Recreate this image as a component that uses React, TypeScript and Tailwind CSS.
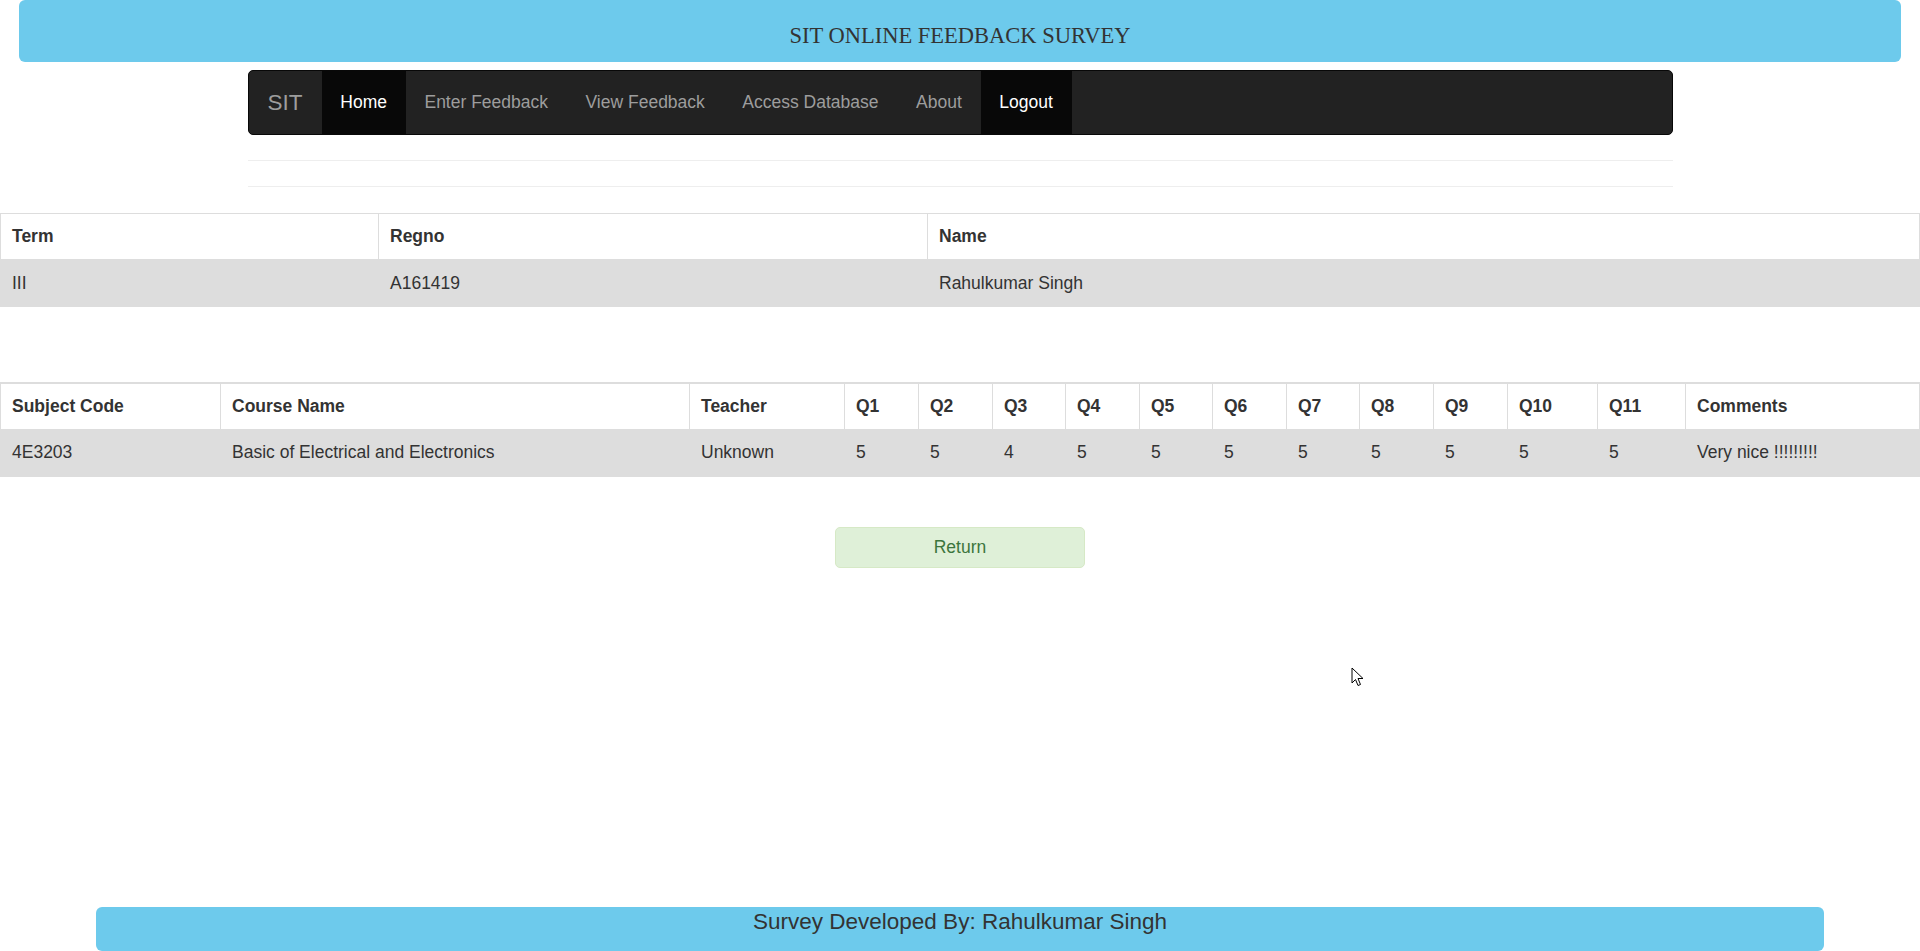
const navLinks = [
  { label: "Home", active: true },
  { label: "Enter Feedback" },
  { label: "View Feedback" },
  { label: "Access Database" },
  { label: "About" },
  { label: "Logout", active: true },
];

const studentCols = [
  { label: "Term", w: "w-[378px]" },
  { label: "Regno", w: "w-[549px]" },
  { label: "Name", w: "" },
];

const feedbackCols = [
  { label: "Subject Code", w: "w-[220px]" },
  { label: "Course Name", w: "w-[469px]" },
  { label: "Teacher", w: "w-[155px]" },
  { label: "Q1", w: "w-[74px]" },
  { label: "Q2", w: "w-[74px]" },
  { label: "Q3", w: "w-[73px]" },
  { label: "Q4", w: "w-[74px]" },
  { label: "Q5", w: "w-[73px]" },
  { label: "Q6", w: "w-[74px]" },
  { label: "Q7", w: "w-[73px]" },
  { label: "Q8", w: "w-[74px]" },
  { label: "Q9", w: "w-[74px]" },
  { label: "Q10", w: "w-[90px]" },
  { label: "Q11", w: "w-[88px]" },
  { label: "Comments", w: "" },
];

const feedbackRow = [
  "4E3203",
  "Basic of Electrical and Electronics",
  "Unknown",
  "5", "5", "4", "5", "5", "5", "5", "5", "5", "5", "5",
  "Very nice !!!!!!!!!",
];

function DataTable({
  cols,
  row,
  thickTop,
}: {
  cols: { label: string; w: string }[];
  row: string[];
  thickTop?: boolean;
}) {
  return (
    <table
      className={`w-full table-fixed border-collapse text-[17.5px] leading-[25px] text-[#333] ${
        thickTop ? "border-t-2 border-[#ddd]" : ""
      }`}
    >
      <thead>
        <tr>
          {cols.map((c) => (
            <th
              key={c.label}
              className={`${c.w} h-[46px] border border-[#ddd] bg-white px-[11px] text-left align-middle font-bold`}
            >
              {c.label}
            </th>
          ))}
        </tr>
      </thead>
      <tbody>
        <tr className="bg-[#dddddd]">
          {row.map((v, i) => (
            <td key={i} className="h-[47px] border border-[#ddd] px-[11px] align-middle whitespace-nowrap">
              {v}
            </td>
          ))}
        </tr>
      </tbody>
    </table>
  );
}

function Cursor() {
  return (
    <svg
      className="pointer-events-none absolute left-[1351px] top-[667px]"
      width="13"
      height="21"
      viewBox="0 0 13 21"
    >
      <path
        d="M1 1 L1 16 L4.5 12.5 L7 18.5 L9.5 17.5 L7 11.5 L12 11.5 Z"
        fill="white"
        stroke="black"
        strokeWidth="1"
        strokeLinejoin="round"
      />
    </svg>
  );
}

export default function App() {
  return (
    <div className="relative flex min-h-[951px] flex-col bg-white font-['Liberation_Sans',Arial,sans-serif] text-[#333]">
      <header className="mx-[19px] flex h-[62px] items-center justify-center rounded-md bg-[#6dcaec] pt-[10px]">
        <h1 className="font-['Liberation_Serif','Times_New_Roman',serif] text-[22.5px] font-normal text-[#333]">
          SIT ONLINE FEEDBACK SURVEY
        </h1>
      </header>

      <div className="mx-auto mt-[8px] w-[1425px]">
        <nav className="flex h-[65px] items-stretch rounded-[5px] border border-[#080808] bg-[#222]">
          <span className="flex items-center px-[19px] text-[22.5px] text-[#9d9d9d]">SIT</span>
          {navLinks.map((l) => (
            <a
              key={l.label}
              className={`flex items-center px-[18.75px] text-[17.5px] ${
                l.active ? "bg-[#080808] text-white" : "text-[#9d9d9d]"
              }`}
            >
              {l.label}
            </a>
          ))}
        </nav>
        <hr className="mt-[25px] border-t border-[#eee]" />
        <hr className="mt-[25px] border-t border-[#eee]" />
      </div>

      <div className="mt-[26px]">
        <DataTable cols={studentCols} row={["III", "A161419", "Rahulkumar Singh"]} />
      </div>

      <div className="mt-[75px]">
        <DataTable cols={feedbackCols} row={feedbackRow} thickTop />
      </div>

      <div className="mt-[50px] flex justify-center">
        <button className="h-[41px] w-[250px] rounded-[5px] border border-[#d6e9c6] bg-[#dff0d8] text-[17.5px] text-[#3c763d]">
          Return
        </button>
      </div>

      <footer className="mx-[96px] mt-auto flex h-[44px] justify-center rounded-md bg-[#6dcaec] pt-[1px]">
        <h4 className="text-[22.5px] leading-[28px] text-[#333]">Survey Developed By: Rahulkumar Singh</h4>
      </footer>

      <Cursor />
    </div>
  );
}
